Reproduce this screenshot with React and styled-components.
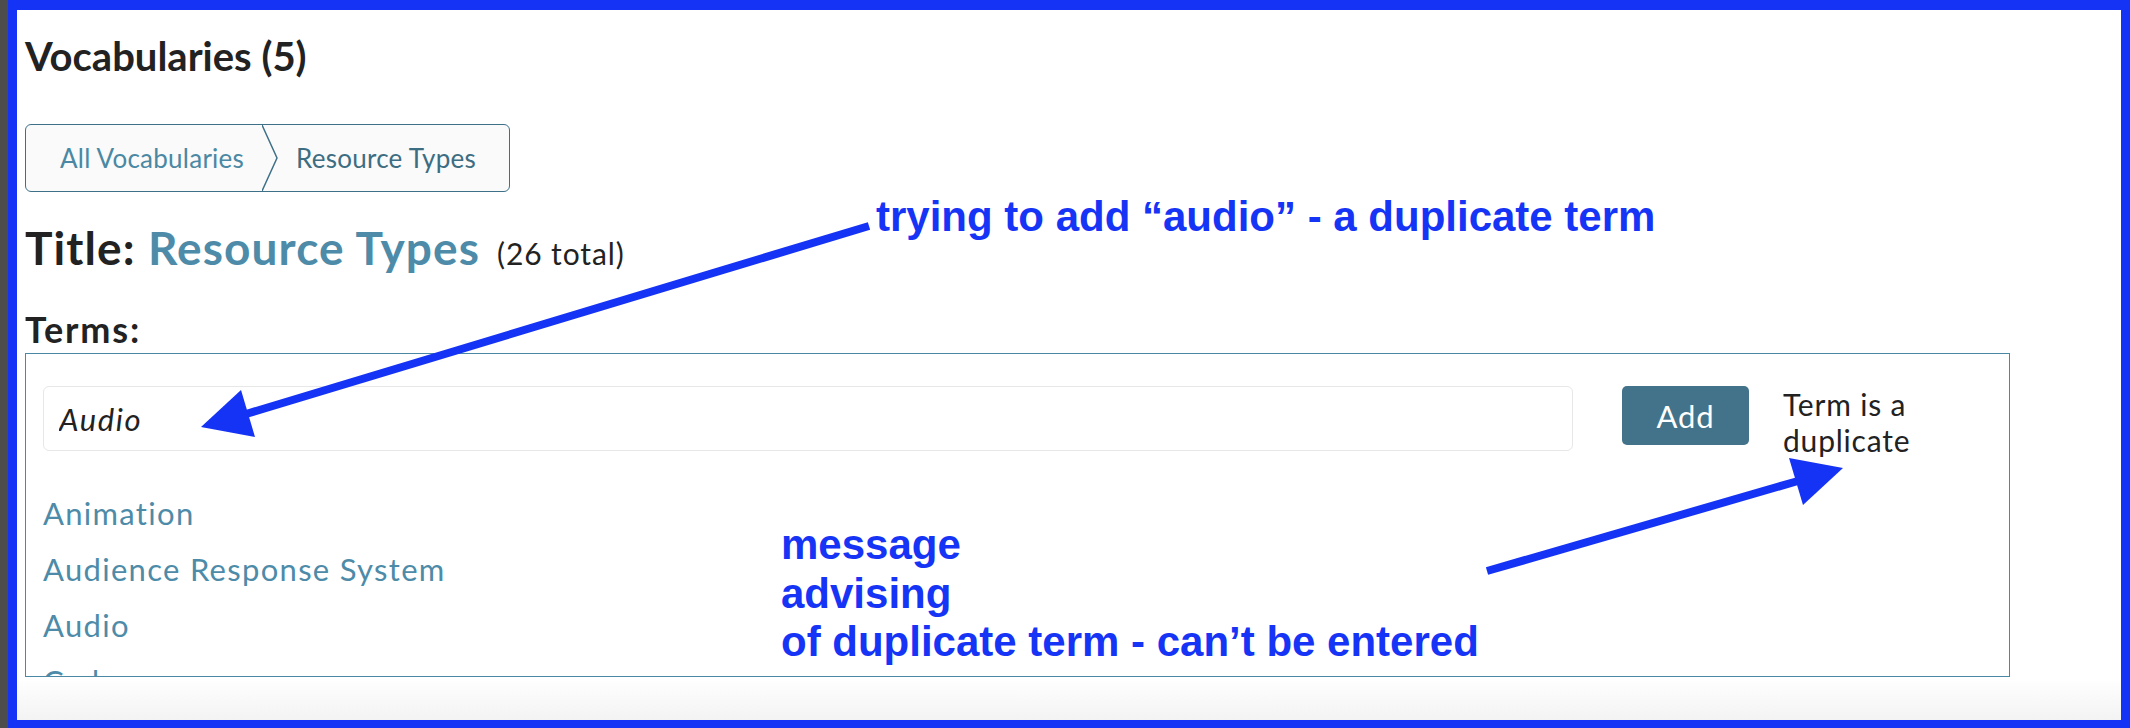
import React from "react";
import styled, { createGlobalStyle } from "styled-components";

const GlobalStyle = createGlobalStyle`
  html, body { margin: 0; padding: 0; }
  body { background: #4d4d4d; font-family: "Lato", "Noto Sans", sans-serif; }
  * { box-sizing: border-box; }
`;

const Screen = styled.div`
  position: relative;
  display: flex;
  width: 2130px;
  height: 728px;
  background: #4d4d4d;
  overflow: hidden;
`;

const Strip = styled.div`
  width: 8px;
  flex: none;
`;

const Frame = styled.div`
  flex: 1;
  border-style: solid;
  border-color: #1533f5;
  border-width: 10px 9px 8px 9px;
  background: linear-gradient(to bottom, #ffffff calc(100% - 42px), #f3f3f3 100%);
  padding: 22px 0 0 8px;
  display: flex;
  flex-direction: column;
  align-items: flex-start;
`;

const Heading = styled.h1`
  margin: 0;
  font-size: 40px;
  line-height: 48px;
  font-weight: 700;
  color: #222;
`;

const Crumbs = styled.nav`
  margin-top: 44px;
  display: inline-flex;
  align-items: stretch;
  height: 68px;
  border: 1.5px solid #3e7088;
  border-radius: 6px;
  background: #fafafa;
  overflow: hidden;
`;

const Crumb = styled.span`
  display: flex;
  align-items: center;
  font-size: 26px;
  letter-spacing: 0.25px;
  color: ${(p) => (p.$current ? "#3d6d82" : "#4a88a3")};
  padding: ${(p) => (p.$current ? "0 33px 0 18px" : "0 18px 0 34px")};
`;

const Chevron = styled.svg`
  width: 16px;
  height: 100%;
  flex: none;
  display: block;
`;

const TitleRow = styled.div`
  margin-top: 28px;
  display: flex;
  align-items: baseline;
  line-height: 55px;
`;

const TitleText = styled.h2`
  margin: 0;
  font-size: 46px;
  font-weight: 700;
  letter-spacing: 1.1px;
  color: #222;
  line-height: 55px;
`;

const TitleName = styled.span`
  color: #4d8ba8;
`;

const Count = styled.span`
  margin-left: 17px;
  font-size: 30px;
  letter-spacing: 0.9px;
  color: #222;
`;

const TermsLabel = styled.h3`
  margin: 27px 0 0 0;
  font-size: 36px;
  line-height: 42px;
  font-weight: 700;
  letter-spacing: 1.8px;
  color: #222;
`;

const TermsBox = styled.section`
  margin-top: 3px;
  width: 1985px;
  height: 324px;
  border: 1px solid #4a88a3;
  padding: 32px 66px 0 17px;
  overflow: hidden;
  background: #fff;
`;

const AddRow = styled.div`
  display: flex;
  align-items: flex-start;
`;

const TermInput = styled.input`
  flex: 1;
  min-width: 0;
  height: 65px;
  border: 1px solid #e7e7e7;
  border-radius: 6px;
  padding: 0 15px;
  font-family: "Lato", "Noto Sans", sans-serif;
  font-size: 31px;
  font-style: italic;
  letter-spacing: 1.6px;
  color: #222;
  background: #fff;
  outline: none;
`;

const AddButton = styled.button`
  margin-left: 49px;
  width: 127px;
  height: 59px;
  border: none;
  border-radius: 5px;
  background: #42738a;
  color: #fff;
  font-family: "Lato", "Noto Sans", sans-serif;
  font-size: 31px;
  letter-spacing: 0.8px;
  padding: 0;
  cursor: pointer;
`;

const Message = styled.div`
  margin-left: 34px;
  width: 160px;
  font-size: 30px;
  line-height: 36px;
  letter-spacing: 0.8px;
  color: #222;
`;

const TermList = styled.ul`
  list-style: none;
  margin: 27px 0 0 0;
  padding: 0;
`;

const TermItem = styled.li`
  font-size: 31px;
  line-height: 56px;
  letter-spacing: 1.3px;
  color: #4d8ba8;
`;

const Overlay = styled.div`
  position: absolute;
  inset: 0;
  pointer-events: none;
`;

const ArrowLayer = styled.svg`
  position: absolute;
  left: 0;
  top: 0;
`;

const Note = styled.div`
  position: absolute;
  left: ${(p) => p.$x}px;
  top: ${(p) => p.$y}px;
  font-family: "Liberation Sans", Arial, sans-serif;
  font-weight: 700;
  font-size: 42px;
  line-height: 48.5px;
  color: #1634f5;
  white-space: nowrap;
`;

const terms = [
  "Animation",
  "Audience Response System",
  "Audio",
  "Cadaver",
  "Case Study",
  "Chart",
  "Clinical Image",
  "Diagram",
];

export default function App() {
  return (
    <>
      <GlobalStyle />
      <Screen>
        <Strip />
        <Frame>
          <Heading>Vocabularies (5)</Heading>
          <Crumbs>
            <Crumb>All Vocabularies</Crumb>
            <Chevron viewBox="0 0 16 66" preserveAspectRatio="none">
              <polyline points="0,0 15,33 0,66" fill="none" stroke="#3e7088" strokeWidth="1.5" />
            </Chevron>
            <Crumb $current>Resource Types</Crumb>
          </Crumbs>
          <TitleRow>
            <TitleText>
              Title: <TitleName>Resource Types</TitleName>
            </TitleText>
            <Count>(26 total)</Count>
          </TitleRow>
          <TermsLabel>Terms:</TermsLabel>
          <TermsBox>
            <AddRow>
              <TermInput defaultValue="Audio" />
              <AddButton>Add</AddButton>
              <Message>Term is a duplicate</Message>
            </AddRow>
            <TermList>
              {terms.map((t) => (
                <TermItem key={t}>{t}</TermItem>
              ))}
            </TermList>
          </TermsBox>
        </Frame>
        <Overlay>
          <ArrowLayer width="2130" height="728" viewBox="0 0 2130 728">
            <line x1="869" y1="226" x2="246" y2="414" stroke="#1533f5" strokeWidth="8" />
            <polygon points="201,427 241,390 255,437" fill="#1533f5" />
            <line x1="1487" y1="571" x2="1798" y2="481" stroke="#1533f5" strokeWidth="8" />
            <polygon points="1843,468 1789,458 1803,505" fill="#1533f5" />
          </ArrowLayer>
          <Note $x={876} $y={193}>trying to add “audio” - a duplicate term</Note>
          <Note $x={781} $y={521}>
            message
            <br />
            advising
            <br />
            of duplicate term - can’t be entered
          </Note>
        </Overlay>
      </Screen>
    </>
  );
}
